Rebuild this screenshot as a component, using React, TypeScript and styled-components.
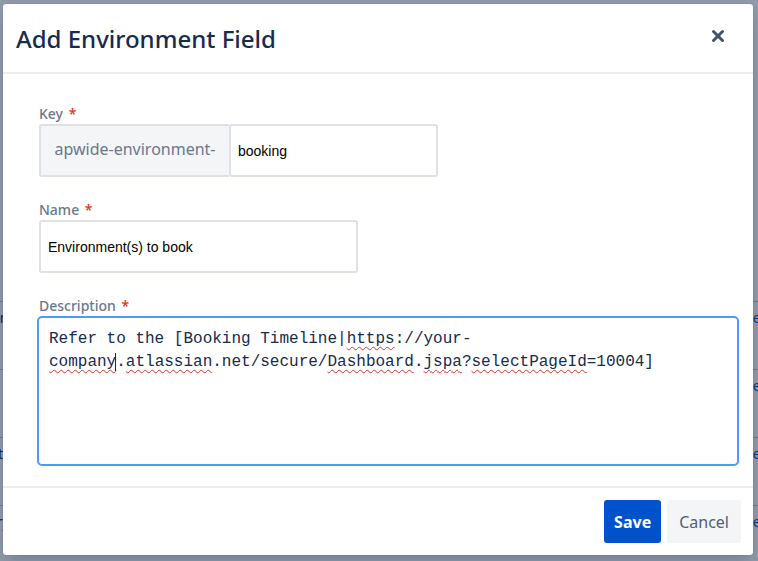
import React from 'react'
import styled, { createGlobalStyle } from 'styled-components'

const GlobalStyle = createGlobalStyle`
    html, body {
        margin: 0;
        padding: 0;
        width: 758px;
        height: 561px;
        overflow: hidden;
        font-family: "Noto Sans", "Open Sans", sans-serif;
    }
`

const rows = ['', 'Environment', 'Status', 'Application', 'Category', 'Version']

export default function App() {
    return (
        <Screen>
            <GlobalStyle />
            <BackPage>
                {rows.map((r, i) => (
                    <BackRow key={i}>
                        <BackText>{r}</BackText>
                        <BackLink>{r ? 'edit' : ''}</BackLink>
                    </BackRow>
                ))}
            </BackPage>
            <Blanket>
                <Modal>
                    <Header>
                        <Title>Add Environment Field</Title>
                        <CloseButton type="button" aria-label="Close">
                            <svg width="14" height="14" viewBox="0 0 14 14">
                                <path d="M2.5 2.5 L11.5 11.5 M11.5 2.5 L2.5 11.5" stroke="#42526e" strokeWidth="3" strokeLinecap="round" />
                            </svg>
                        </CloseButton>
                    </Header>
                    <Body>
                        <Field>
                            <Label>Key <Required>*</Required></Label>
                            <KeyGroup>
                                <Prefix>apwide-environment-</Prefix>
                                <TextInput $width={209} defaultValue="booking" />
                            </KeyGroup>
                        </Field>
                        <Field>
                            <Label>Name <Required>*</Required></Label>
                            <TextInput $width={319} defaultValue="Environment(s) to book" />
                        </Field>
                        <Field>
                            <Label>Description <Required>*</Required></Label>
                            <TextArea role="textbox">
                                {'Refer to the [Booking Timeline|'}
                                <Misspelled>https</Misspelled>
                                {'://your-'}
                                <Misspelled>company</Misspelled>
                                <Caret />
                                {'.'}
                                <Misspelled>atlassian</Misspelled>
                                {'.net/secure/'}
                                <Misspelled>Dashboard</Misspelled>
                                {'.'}
                                <Misspelled>jspa</Misspelled>
                                {'?'}
                                <Misspelled>selectPageId</Misspelled>
                                {'=10004]'}
                            </TextArea>
                        </Field>
                    </Body>
                    <Footer>
                        <Button $primary type="button">Save</Button>
                        <Button type="button">Cancel</Button>
                    </Footer>
                </Modal>
            </Blanket>
        </Screen>
    )
}

const Screen = styled.div`
    position: relative;
    width: 758px;
    height: 561px;
    overflow: hidden;
    background: #ffffff;
`

const BackPage = styled.div`
    padding-top: 234px;
    display: flex;
    flex-direction: column;
`

const BackRow = styled.div`
    height: 68px;
    border-bottom: 1px solid #c1c7d0;
    display: flex;
    align-items: flex-end;
    justify-content: space-between;
    padding-bottom: 42px;
    box-sizing: border-box;
    font-size: 14px;
`

const BackText = styled.span`
    color: #172b4d;
    margin-left: -50px;
`

const BackLink = styled.span`
    color: #0052cc;
    margin-right: -20px;
`

const Blanket = styled.div`
    position: absolute;
    inset: 0;
    background: rgba(9, 30, 66, 0.45);
    padding: 4px 5px 6px 3px;
    box-sizing: border-box;
`

const Modal = styled.div`
    width: 750px;
    height: 551px;
    background: #ffffff;
    border-radius: 3px;
    box-shadow: 0 0 1px rgba(9, 30, 66, 0.31), 0 8px 16px -4px rgba(9, 30, 66, 0.25);
    display: flex;
    flex-direction: column;
`

const Header = styled.div`
    height: 68px;
    flex-shrink: 0;
    display: flex;
    align-items: center;
    justify-content: space-between;
    padding: 0 28px 0 13px;
    border-bottom: 2px solid #ebecf0;
`

const Title = styled.h1`
    margin: 0;
    font-size: 24px;
    font-weight: 500;
    color: #172b4d;
`

const CloseButton = styled.button`
    border: none;
    background: none;
    padding: 0;
    margin-top: -4px;
    display: flex;
    cursor: pointer;
`

const Body = styled.div`
    flex: 1;
    padding: 31px 14px 0 36px;
    display: flex;
    flex-direction: column;
    gap: 24px;
`

const Field = styled.div`
    display: flex;
    flex-direction: column;
    gap: 1px;
`

const Label = styled.label`
    font-size: 14px;
    line-height: 18px;
    font-weight: 500;
    color: #6b778c;
`

const Required = styled.span`
    color: #de350b;
    margin-left: 2px;
`

const KeyGroup = styled.div`
    display: flex;
`

const Prefix = styled.div`
    width: 190px;
    height: 53px;
    box-sizing: border-box;
    background: #f4f5f7;
    border: 2px solid #dfe1e6;
    border-right: none;
    border-radius: 3px 0 0 3px;
    display: flex;
    align-items: center;
    justify-content: center;
    font-size: 16px;
    color: #6b778c;
    padding-bottom: 4px;
`

const TextInput = styled.input<{ $width: number }>`
    width: ${(p) => p.$width}px;
    height: 53px;
    box-sizing: border-box;
    border: 2px solid #dfe1e6;
    border-radius: 3px;
    background: #ffffff;
    padding: 0 7px;
    font-family: "Liberation Sans", Arial, sans-serif;
    font-size: 14px;
    color: #000000;
    outline: none;
`

const TextArea = styled.div`
    margin-left: -2px;
    height: 150px;
    box-sizing: border-box;
    border: 2px solid #4c9aff;
    border-radius: 5px;
    padding: 10px 10px;
    font-family: "Liberation Mono", "DejaVu Sans Mono", monospace;
    font-size: 16px;
    line-height: 23px;
    color: #172b4d;
    white-space: pre-wrap;
    word-break: normal;
    overflow-wrap: break-word;
`

const Misspelled = styled.span`
    text-decoration: underline wavy #e5322b;
    text-decoration-thickness: 1px;
    text-underline-offset: 3px;
`

const Caret = styled.span`
    border-left: 1px solid #172b4d;
    margin-left: -1px;
`

const Footer = styled.div`
    height: 69px;
    flex-shrink: 0;
    border-top: 2px solid #ebecf0;
    display: flex;
    justify-content: flex-end;
    align-items: flex-start;
    gap: 6px;
    padding: 12px 12px 0 0;
    box-sizing: border-box;
`

const Button = styled.button<{ $primary?: boolean }>`
    height: 43px;
    border: none;
    border-radius: 3px;
    padding: 0 ${(p) => (p.$primary ? 10 : 12)}px;
    font-family: "Noto Sans", "Open Sans", sans-serif;
    font-size: 16px;
    font-weight: ${(p) => (p.$primary ? 700 : 400)};
    color: ${(p) => (p.$primary ? '#ffffff' : '#505f79')};
    background: ${(p) => (p.$primary ? '#0052cc' : '#f4f5f7')};
    cursor: pointer;
`
